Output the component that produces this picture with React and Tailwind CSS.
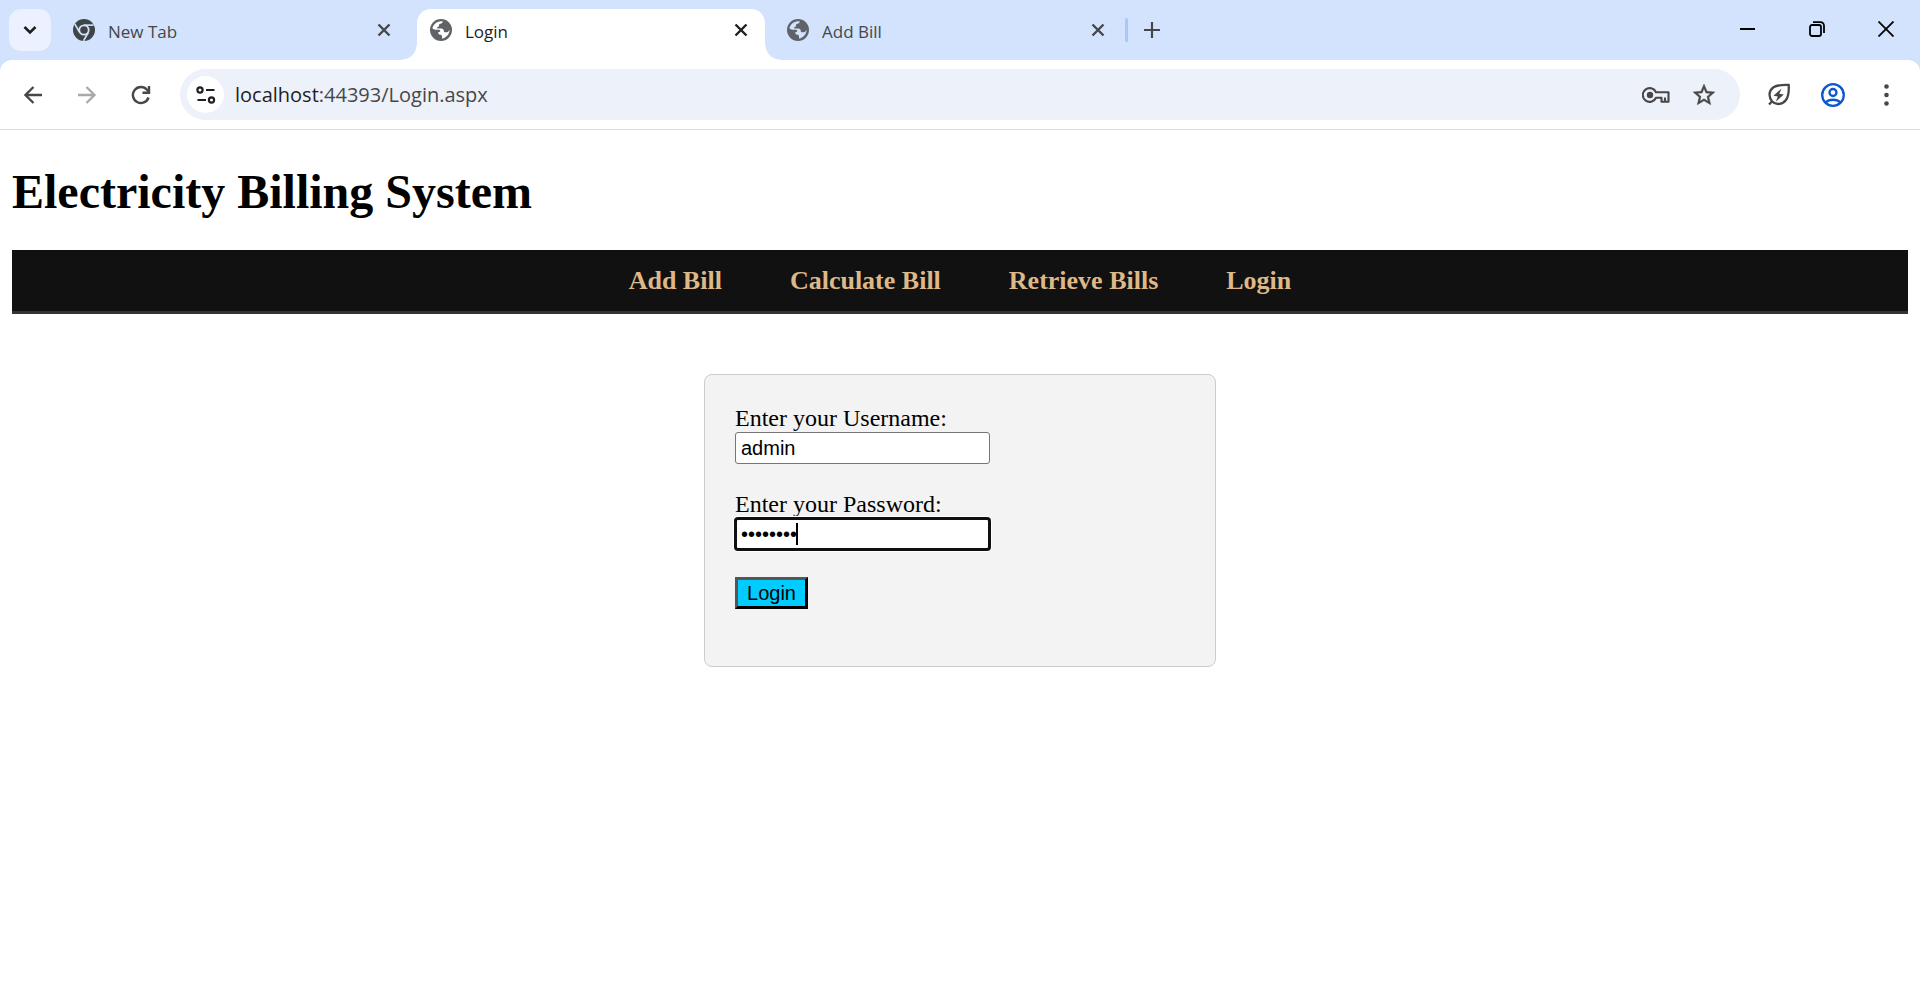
import React from "react";

const chromeText = "font-['Open_Sans','Noto_Sans',sans-serif]";

function ChromeIcon() {
  return (
    <svg width="22" height="22" viewBox="0 0 22 22" aria-hidden="true">
      <circle cx="11" cy="11" r="11" fill="#3f4447" />
      <circle cx="11" cy="11" r="5.6" fill="#d3e3fd" />
      <circle cx="11" cy="11" r="3.8" fill="#3f4447" />
      <g stroke="#d3e3fd" strokeWidth="1.6" fill="none">
        <path d="M11 6.1H20.6" />
        <path d="M6.7 13.5L1.9 5.2" />
        <path d="M15.3 13.5L10.5 21.8" />
      </g>
    </svg>
  );
}

function GlobeIcon({ background }) {
  return (
    <svg width="22" height="22" viewBox="0 0 22 22" aria-hidden="true">
      <circle cx="11" cy="11" r="11" fill="#5f6368" />
      <path
        fill={background}
        d="M2.4 9.6C3.2 5.5 6.500 2.500 11 2.300h1.800c-.2 1.500-1 2.300-2.500 2.400c-1 0-1.300.8-1.300 1.800c0 1.200-1 1.300-1.700 1.700c-.5.4-.3 1.200.4 1.300h3.600c1.700 0 2.500 1 2.500 2.600c0 .9.600 1.200 1.500 1.200h1.700c1.500-.1 1.700-1.700 2.600-2.600c-.1 4.300-3.200 8-7.600 8.900v-2.200c0-1-.7-1.600-1.700-1.600c-1.400 0-2-.8-2-2v-.8c1.200 0 2-.3 2-1.100c0-.9-.8-1.200-1.900-1.200H5.400C4.300 10.700 3.300 10.300 2.400 9.600z"
      />
    </svg>
  );
}

function CloseIcon() {
  return (
    <svg width="14" height="14" viewBox="0 0 14 14" fill="none" stroke="currentColor" strokeWidth="2.4" aria-hidden="true">
      <path d="M1.5 1.5l11 11M12.5 1.5l-11 11" />
    </svg>
  );
}

function Tab({ icon, title, active }) {
  return (
    <div
      className={
        active
          ? "relative flex h-[51px] w-[348px] items-center rounded-t-[14px] bg-white pr-[17px] pb-[9px] pl-[13px] text-[#1f1f1f]"
          : "relative flex h-[51px] w-[348px] items-center pr-[17px] pb-[9px] pl-[13px] text-[#45474a]"
      }
    >
      {active && (
        <>
          <span className="absolute bottom-0 -left-[15px] size-[15px] bg-[radial-gradient(circle_at_0_0,#d3e3fd_14px,#fff_15px)]" />
          <span className="absolute -right-[15px] bottom-0 size-[15px] bg-[radial-gradient(circle_at_100%_0,#d3e3fd_14px,#fff_15px)]" />
        </>
      )}
      {icon}
      <span className="ml-[13px] flex-1 pt-[3px] text-[17px] leading-6">{title}</span>
      <button type="button" aria-label={"Close " + title}>
        <CloseIcon />
      </button>
    </div>
  );
}

function TabStrip() {
  return (
    <div className={`${chromeText} flex h-[60px] bg-[#d3e3fd] pt-[9px]`}>
      <button type="button" aria-label="Search tabs" className="ml-[9px] flex size-[42px] items-center justify-center rounded-xl bg-[#ebf1fe]">
        <svg width="14" height="10" viewBox="0 0 14 10" fill="none" stroke="#1f1f1f" strokeWidth="2.6" aria-hidden="true">
          <path d="M1.5 2l5.5 5.5L12.5 2" />
        </svg>
      </button>
      <div className="ml-[9px] flex gap-[9px]">
        <Tab icon={<ChromeIcon />} title="New Tab" />
        <Tab icon={<GlobeIcon background="#fff" />} title="Login" active />
        <Tab icon={<GlobeIcon background="#d3e3fd" />} title="Add Bill" />
      </div>
      <span className="mt-[9px] ml-[3px] h-6 w-[3px] rounded-full bg-[#a8c7fa]" />
      <button type="button" aria-label="New tab" className="ml-4 flex h-[42px] items-center">
        <svg width="16" height="16" viewBox="0 0 16 16" fill="none" stroke="#45474a" strokeWidth="2.2" aria-hidden="true">
          <path d="M8 0v16M0 8h16" />
        </svg>
      </button>
      <div className="mr-[26px] ml-auto flex h-10 items-center gap-[53px] text-black">
        <button type="button" aria-label="Minimize">
          <svg width="16" height="16" viewBox="0 0 16 16" aria-hidden="true">
            <path d="M0 7h15v2H0z" />
          </svg>
        </button>
        <button type="button" aria-label="Restore">
          <svg width="16" height="16" viewBox="0 0 16 16" fill="none" stroke="#000" strokeWidth="1.8" aria-hidden="true">
            <rect x="1" y="4" width="11" height="11" rx="2" />
            <path d="M4 1.2h7.5a3.5 3.5 0 0 1 3.5 3.5V12" />
          </svg>
        </button>
        <button type="button" aria-label="Close window">
          <svg width="16" height="16" viewBox="0 0 16 16" fill="none" stroke="#000" strokeWidth="1.8" aria-hidden="true">
            <path d="M.5.5l15 15M15.5.5l-15 15" />
          </svg>
        </button>
      </div>
    </div>
  );
}

function Toolbar() {
  return (
    <div className="bg-[#d3e3fd]">
      <div className={`${chromeText} flex h-[70px] items-center rounded-t-xl border-b border-[#dcdcdc] bg-white pr-[31px] pl-6 text-[#474747]`}>
        <button type="button" aria-label="Back">
          <svg width="20" height="20" viewBox="0 0 20 20" fill="none" stroke="currentColor" strokeWidth="2.3" aria-hidden="true">
            <path d="M18 10H1.500M9.500 2l-8 8 8 8" />
          </svg>
        </button>
        <button type="button" aria-label="Forward" className="ml-[33px] text-[#a9a9a9]">
          <svg width="20" height="20" viewBox="0 0 20 20" fill="none" stroke="currentColor" strokeWidth="2.3" aria-hidden="true">
            <path d="M1 10h16.5M9.5 2l8 8-8 8" />
          </svg>
        </button>
        <button type="button" aria-label="Reload" className="ml-[34px]">
          <svg width="20" height="20" viewBox="0 0 20 20" fill="none" stroke="currentColor" strokeWidth="2.4" aria-hidden="true">
            <path d="M17.5 12.5A8 8 0 1 1 16 4.8L18 7" />
            <path d="M18 1v6.7h-6.5" />
          </svg>
        </button>
        <div className="ml-[29px] flex h-[51px] flex-1 items-center rounded-full bg-[#ecf1fa] pr-6 pl-[7px]">
          <button type="button" aria-label="View site information" className="flex size-[37px] items-center justify-center rounded-full bg-white">
            <svg width="20" height="18" viewBox="0 0 20 18" fill="none" stroke="#1f1f1f" strokeWidth="2.2" aria-hidden="true">
              <circle cx="4" cy="4" r="2.6" />
              <path d="M10 4h8.5M1.5 14H10" />
              <circle cx="15.5" cy="14" r="2.6" />
            </svg>
          </button>
          <div className="ml-[11px] flex-1 text-xl leading-7">
            <span className="text-[#1f1f1f]">localhost</span>:44393/Login.aspx
          </div>
          <button type="button" aria-label="Manage passwords">
            <svg width="28" height="18" viewBox="0 0 28 18" fill="none" stroke="currentColor" strokeWidth="2.1" aria-hidden="true">
              <path d="M14 6.2A6.9 6.9 0 1 0 14 11.8H19.5v4h7V6.2z" strokeLinejoin="round" />
              <circle cx="8" cy="9" r="3.2" fill="currentColor" stroke="none" />
              <path d="M23 11.5v4.5" />
            </svg>
          </button>
          <button type="button" aria-label="Bookmark this tab" className="ml-[22px]">
            <svg width="24" height="24" viewBox="1 1 22 22" fill="currentColor" stroke="currentColor" strokeWidth="0.4" aria-hidden="true">
              <path d="M22 9.24l-7.19-.62L12 2 9.19 8.63 2 9.24l5.46 4.73L5.82 21 12 17.27 18.18 21l-1.63-7.03L22 9.24zM12 15.4l-3.76 2.27 1-4.28-3.32-2.88 4.38-.38L12 6.1l1.71 4.04 4.38.38-3.32 2.88 1 4.28L12 15.4z" />
            </svg>
          </button>
        </div>
        <button type="button" aria-label="Energy saver" className="ml-7">
          <svg width="22" height="23" viewBox="0 0 22 23" fill="none" stroke="currentColor" strokeWidth="2.3" aria-hidden="true">
            <path d="M1 21.5l3.2-3.2M4.2 18.5C.2 14 .8 7.5 5.5 4.2C9.500 1.700 15 1.800 20.700 2c.3 5.500.3 11-2.700 15C14.500 21.500 8 22.500 4.200 18.500z" />
            <path d="M13.5 5.5l-8 7.2 4.3.8-2 5.2 8-7.2-4.5-.8z" fill="currentColor" stroke="none" />
          </svg>
        </button>
        <button type="button" aria-label="Profile" className="ml-[31px] text-[#0b57d0]">
          <svg width="24" height="24" viewBox="0 0 24 24" fill="none" stroke="currentColor" strokeWidth="2.3" aria-hidden="true">
            <circle cx="12" cy="12" r="10.8" />
            <circle cx="12" cy="9.5" r="3.5" />
            <path d="M4.5 19.5C8.5 15.8 15.5 15.8 19.5 19.5" />
          </svg>
        </button>
        <button type="button" aria-label="Menu" className="ml-[39px]">
          <svg width="5" height="22" viewBox="0 0 5 22" fill="currentColor" aria-hidden="true">
            <circle cx="2.5" cy="2.5" r="2.3" />
            <circle cx="2.5" cy="11" r="2.3" />
            <circle cx="2.5" cy="19.5" r="2.3" />
          </svg>
        </button>
      </div>
    </div>
  );
}

const links = ["Add Bill", "Calculate Bill", "Retrieve Bills", "Login"];

export default function App() {
  return (
    <div className="min-h-screen bg-white">
      <TabStrip />
      <Toolbar />
      <main className="mx-3 pt-[34px] font-['Liberation_Serif',serif] text-2xl leading-[27px] text-black">
        <h1 className="text-5xl leading-[56px] font-bold">Electricity Billing System</h1>
        <nav className="mt-[30px] flex h-16 items-center justify-center gap-[68px] border-b-[3px] border-[#333] bg-[#111] text-[26px] font-bold text-[#deb887]">
          {links.map((label) => (
            <a key={label} href="#">{label}</a>
          ))}
        </nav>
        <form
          className="mx-auto mt-[60px] flex w-full max-w-[512px] flex-col items-start rounded-lg border border-[#ccc] bg-[#f3f3f3] px-[30px] pt-[30px] pb-[57px]"
          onSubmit={(e) => e.preventDefault()}
        >
          <label htmlFor="username">Enter your Username:</label>
          <input
            id="username"
            type="text"
            defaultValue="admin"
            className="h-8 w-[255px] rounded-[3px] border border-[#767676] bg-white px-[5px] font-['Liberation_Sans',sans-serif] text-xl leading-6 outline-none"
          />
          <label htmlFor="password" className="mt-[27px]">Enter your Password:</label>
          <div className="relative">
            <input
              id="password"
              type="password"
              defaultValue="password"
              className="block h-8 w-[255px] rounded-[3px] border-2 border-[#101010] bg-white px-1 font-['Liberation_Sans',sans-serif] text-xl leading-6 caret-transparent shadow-[0_0_0_1px_#101010,0_0_0_2px_#fff] outline-none"
            />
            <span className="absolute top-[5px] left-[61px] h-[22px] w-0.5 bg-black" />
          </div>
          <button
            type="submit"
            className="mt-[27px] h-8 w-[73px] border-[3px] border-t-[#555] border-r-black border-b-black border-l-[#555] bg-[#00ccff] font-['Liberation_Sans',sans-serif] text-xl leading-6"
          >
            Login
          </button>
        </form>
      </main>
    </div>
  );
}
